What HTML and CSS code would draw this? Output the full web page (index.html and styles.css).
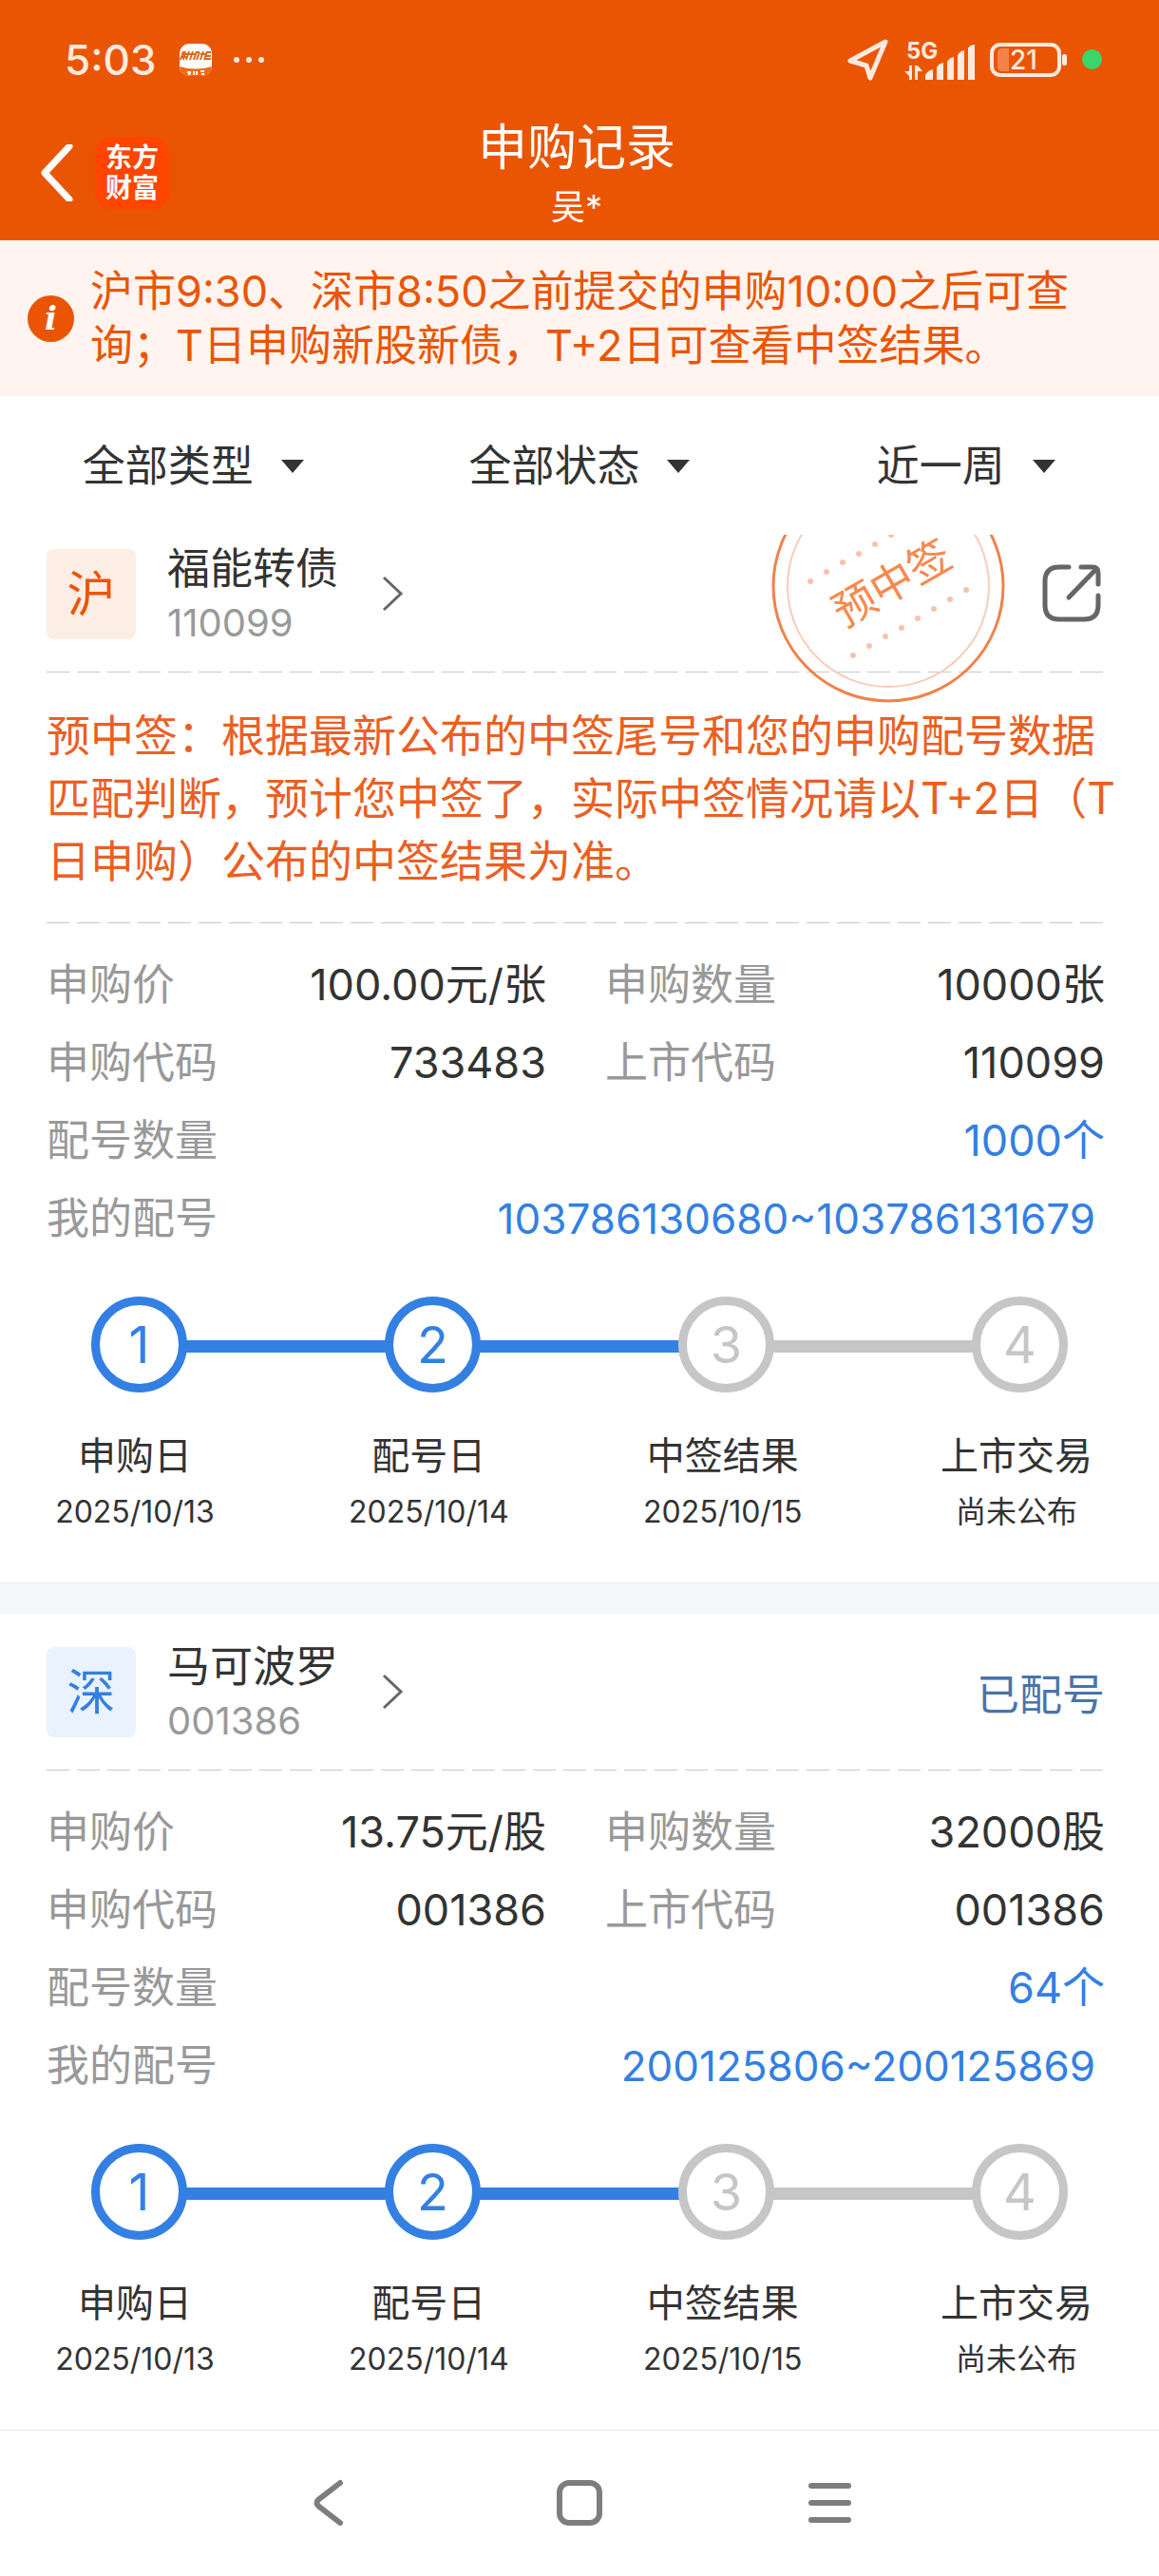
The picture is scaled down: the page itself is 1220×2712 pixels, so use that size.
FILE: index.html
```html
<!DOCTYPE html>
<html lang="zh-CN">
<head>
<meta charset="utf-8">
<meta name="viewport" content="width=device-width, initial-scale=1">
<title>申购记录</title>
<link rel="stylesheet" href="styles.css">
</head>
<body>
<header class="header">
  <div class="status">
    <span class="status-time">5:03</span>
    <svg class="status-app" width="34" height="34" viewBox="0 0 34 34" aria-hidden="true">
      <rect width="34" height="34" rx="10" fill="#fff"/>
      <path d="M0 24Q17 29 34 24A10 10 0 0 1 24 34H10A10 10 0 0 1 0 24Z" fill="#f26a10"/>
      <g fill="none" stroke="#d9691c" stroke-width="2">
        <path d="M4 8L1 17M6 8l-2 9M2 11h7M1 14h7M10 8l-3 9M14 8l-3 9M9 11h7M18 8l-3 9M17 9h4M21 9l-3 8M25 8l-3 9M22 11h5M29 8l-3 9M29 9h4M28 13h5M27 16h6"/>
      </g>
      <path d="M8 30h4M9 32h3M15 29v4M18 29v4M22 29h4M23 32h3" stroke="#fff" stroke-width="2"/>
    </svg>
    <svg width="34" height="8" viewBox="0 0 34 8" fill="#ffeadf" aria-hidden="true"><circle cx="4" cy="4" r="3"/><circle cx="17" cy="4" r="3"/><circle cx="30" cy="4" r="3"/></svg>
    <div class="status-right">
      <svg width="46" height="46" viewBox="0 0 46 46" fill="none" stroke="#ffeadf" stroke-width="5" stroke-linejoin="round" aria-hidden="true"><path d="M41 4L4 24l17 5 4 13Z"/></svg>
      <svg class="signal" width="76" height="56" viewBox="0 -7 76 56" fill="#ffeadf" aria-hidden="true">
        <text class="signal-text" x="3" y="20">5G</text>
        <path d="M9 27v15H6v-4l-5-5h5v-6ZM12 42V27h3l5 6h-5v9Z"/>
        <path d="M23 42v-5q3-5 8-6v11ZM35 42V29q2-4 7-5v18ZM46 42V23q2-4 7-5v24ZM57 42V16q2-4 7-5v31ZM68 42V9q2-4 7-4v37Z"/>
      </svg>
      <svg width="84" height="38" viewBox="0 0 84 38" aria-hidden="true">
        <rect x="3" y="3" width="71" height="32" rx="9" fill="none" stroke="#ffeadf" stroke-width="4"/>
        <path d="M21 7v24h-7q-5 0-5-5V12q0-5 5-5Z" fill="#f4834a"/>
        <rect x="77" y="13" width="5" height="12" rx="2" fill="#ffeadf"/>
        <text class="battery-text" x="22" y="29" fill="#ffeadf">21</text>
      </svg>
      <span class="status-dot"></span>
    </div>
  </div>
  <div class="titlebar">
    <div class="titlebar-left">
      <button class="icon-button" type="button" aria-label="返回">
        <svg width="36" height="60" viewBox="0 0 36 60" fill="none" stroke="#fff" stroke-width="7" stroke-linecap="round" stroke-linejoin="round"><path d="M31 2L5 30l26 28"/></svg>
      </button>
      <span class="logo">东方<br>财富</span>
    </div>
    <div class="titlebar-center">
      <h1 class="title">申购记录</h1>
      <p class="subtitle">吴*</p>
    </div>
  </div>
</header>

<main>
  <section class="notice">
    <span class="notice-icon" aria-hidden="true">i</span>
    <p class="notice-text">沪市9:30、深市8:50之前提交的申购10:00之后可查询；T日申购新股新债，T+2日可查看中签结果。</p>
  </section>

  <form class="filters">
    <label class="filter"><select class="filter-select" aria-label="类型"><option>全部类型</option></select><span class="filter-arrow"></span></label>
    <label class="filter"><select class="filter-select" aria-label="状态"><option>全部状态</option></select><span class="filter-arrow"></span></label>
    <label class="filter"><select class="filter-select" aria-label="时间"><option>近一周</option></select><span class="filter-arrow"></span></label>
  </form>

  <article class="card">
    <svg class="stamp" width="250" height="250" viewBox="0 0 250 250" aria-label="预中签" role="img">
      <circle cx="125" cy="125" r="121" fill="none" stroke="#f0824a" stroke-width="3"/>
      <circle cx="125" cy="125" r="106" fill="none" stroke="#f8cdb8" stroke-width="2"/>
      <g fill="#f6c3aa">
        <circle cx="43" cy="120" r="3"/><circle cx="60" cy="110" r="3"/><circle cx="77" cy="100" r="3"/><circle cx="94" cy="91" r="3"/><circle cx="111" cy="81" r="3"/><circle cx="128" cy="71" r="3"/>
        <circle cx="88" cy="198" r="3"/><circle cx="105" cy="188" r="3"/><circle cx="122" cy="178" r="3"/><circle cx="139" cy="169" r="3"/><circle cx="156" cy="159" r="3"/><circle cx="173" cy="149" r="3"/><circle cx="190" cy="139" r="3"/><circle cx="207" cy="129" r="3"/>
      </g>
      <text class="stamp-text" x="129" y="138" text-anchor="middle" transform="rotate(-30 129 122)">预中签</text>
    </svg>
    <div class="card-head">
      <span class="market market-sh">沪</span>
      <a class="stock" href="#110099">
        <span class="stock-names"><span class="stock-name">福能转债</span><span class="stock-code">110099</span></span>
        <svg width="24" height="40" viewBox="0 0 24 40" fill="none" stroke="#666" stroke-width="3"><path d="M2 3l18 17L2 37"/></svg>
      </a>
      <button class="icon-button share" type="button" aria-label="分享">
        <svg width="62" height="62" viewBox="0 0 62 62" fill="none" stroke="#666" stroke-width="5" stroke-linecap="round" stroke-linejoin="round"><path d="M28 3H18Q3 3 3 18v25Q3 58 18 58h26Q59 58 59 43V33M41 3h12q6 0 6 6v12M57 5L28 35"/></svg>
      </button>
    </div>
    <hr class="dash">
    <p class="tip">预中签：根据最新公布的中签尾号和您的申购配号数据匹配判断，预计您中签了，实际中签情况请以T+2日（T日申购）公布的中签结果为准。</p>
    <hr class="dash">
    <dl class="facts">
      <div class="fact"><dt>申购价</dt><dd>100.00元/张</dd></div>
      <div class="fact"><dt>申购数量</dt><dd>10000张</dd></div>
      <div class="fact"><dt>申购代码</dt><dd>733483</dd></div>
      <div class="fact"><dt>上市代码</dt><dd>110099</dd></div>
      <div class="fact fact-wide"><dt>配号数量</dt><dd class="blue">1000个</dd></div>
      <div class="fact fact-wide fact-range"><dt>我的配号</dt><dd class="blue">103786130680~103786131679</dd></div>
    </dl>
    <div class="track">
      <span class="node done">1</span><span class="link done"></span><span class="node done">2</span><span class="link done"></span><span class="node">3</span><span class="link"></span><span class="node">4</span>
    </div>
    <ol class="steps">
      <li class="step"><span class="step-name">申购日</span><span class="step-date">2025/10/13</span></li>
      <li class="step"><span class="step-name">配号日</span><span class="step-date">2025/10/14</span></li>
      <li class="step"><span class="step-name">中签结果</span><span class="step-date">2025/10/15</span></li>
      <li class="step"><span class="step-name">上市交易</span><span class="step-date">尚未公布</span></li>
    </ol>
  </article>

  <article class="card">
    <div class="card-head">
      <span class="market market-sz">深</span>
      <a class="stock" href="#001386">
        <span class="stock-names"><span class="stock-name">马可波罗</span><span class="stock-code">001386</span></span>
        <svg width="24" height="40" viewBox="0 0 24 40" fill="none" stroke="#666" stroke-width="3"><path d="M2 3l18 17L2 37"/></svg>
      </a>
      <span class="state">已配号</span>
    </div>
    <hr class="dash">
    <dl class="facts">
      <div class="fact"><dt>申购价</dt><dd>13.75元/股</dd></div>
      <div class="fact"><dt>申购数量</dt><dd>32000股</dd></div>
      <div class="fact"><dt>申购代码</dt><dd>001386</dd></div>
      <div class="fact"><dt>上市代码</dt><dd>001386</dd></div>
      <div class="fact fact-wide"><dt>配号数量</dt><dd class="blue">64个</dd></div>
      <div class="fact fact-wide fact-range"><dt>我的配号</dt><dd class="blue">200125806~200125869</dd></div>
    </dl>
    <div class="track">
      <span class="node done">1</span><span class="link done"></span><span class="node done">2</span><span class="link done"></span><span class="node">3</span><span class="link"></span><span class="node">4</span>
    </div>
    <ol class="steps">
      <li class="step"><span class="step-name">申购日</span><span class="step-date">2025/10/13</span></li>
      <li class="step"><span class="step-name">配号日</span><span class="step-date">2025/10/14</span></li>
      <li class="step"><span class="step-name">中签结果</span><span class="step-date">2025/10/15</span></li>
      <li class="step"><span class="step-name">上市交易</span><span class="step-date">尚未公布</span></li>
    </ol>
  </article>
</main>

<nav class="navbar">
  <button class="icon-button nav-button" type="button" aria-label="后退"><svg width="50" height="50" viewBox="0 0 50 50" fill="none" stroke="#7d7d7d" stroke-width="6" stroke-linecap="round"><path d="M37 4L15 21q-5 4 0 8l22 17"/></svg></button>
  <button class="icon-button nav-button" type="button" aria-label="主页"><svg width="50" height="50" viewBox="0 0 50 50" fill="none" stroke="#7d7d7d" stroke-width="6"><rect x="4" y="4" width="42" height="42" rx="10"/></svg></button>
  <button class="icon-button nav-button" type="button" aria-label="最近任务"><svg width="50" height="50" viewBox="0 0 50 50" fill="none" stroke="#7d7d7d" stroke-width="6" stroke-linecap="round"><path d="M5 7h39M5 25h39M5 43h39"/></svg></button>
</nav>
</body>
</html>
```

FILE: styles.css
```css
* {
  box-sizing: border-box;
}

body {
  margin: 0;
  background: #fff;
  color: #333;
  font-family: Inter, "Noto Sans CJK SC", sans-serif;
  font-size: 45px;
}

h1, p, dl, dd, ol {
  margin: 0;
  padding: 0;
}

svg {
  display: block;
}

.icon-button {
  border: 0;
  padding: 0;
  background: none;
}

/* header */
.header {
  background: #ea5504;
  color: #fff;
}

.status {
  display: flex;
  align-items: center;
  height: 125px;
  padding: 0 60px 0 68px;
  color: #ffeadf;
}

.status-time {
  font-size: 44px;
  font-weight: 500;
}

.status-app {
  margin: 0 22px 0 24px;
}

.status-right {
  display: flex;
  align-items: center;
  gap: 14px;
  margin-left: auto;
}

.signal-text {
  font-size: 24px;
  font-weight: 700;
}

.battery-text {
  font-size: 28px;
  font-weight: 500;
}

.status-dot {
  width: 21px;
  height: 21px;
  border-radius: 50%;
  background: #38d66b;
}

.titlebar {
  display: grid;
  grid-template-columns: 1fr auto 1fr;
  align-items: center;
  padding: 0 48px 4px 42px;
}

.titlebar-left {
  display: flex;
  align-items: center;
  gap: 22px;
  padding-bottom: 10px;
}

.logo {
  width: 78px;
  padding: 6px 0;
  border-radius: 18px;
  background: #ff4500;
  font-size: 28px;
  font-weight: 700;
  line-height: 32px;
  text-align: center;
}

.titlebar-center {
  text-align: center;
}

.title {
  font-size: 52px;
  font-weight: 400;
  line-height: 62px;
}

.subtitle {
  font-size: 36px;
  line-height: 62px;
}

/* notice */
.notice {
  display: flex;
  align-items: center;
  gap: 17px;
  padding: 25px 50px 25px 29px;
  background: #fff4ef;
  color: #ea5504;
}

.notice-icon {
  flex: none;
  width: 49px;
  height: 49px;
  border-radius: 50%;
  background: #ea5504;
  color: #fff;
  font: italic 700 34px/48px "DejaVu Serif", serif;
  text-align: center;
}

.notice-text {
  line-height: 57px;
}

/* filters */
.filters {
  display: grid;
  grid-template-columns: repeat(3, 1fr);
  height: 146px;
  padding-top: 2px;
}

.filter {
  display: flex;
  align-items: center;
  justify-content: center;
  gap: 28px;
}

.filter-select {
  appearance: none;
  border: 0;
  padding: 0;
  background: none;
  color: #333;
  font: inherit;
  line-height: 66px;
}

.filter-arrow {
  border: 12px solid transparent;
  border-top: 14px solid #333;
  border-bottom: 0;
}

/* records */
.card {
  position: relative;
  overflow: hidden;
  padding: 22px 57px 44px 49px;
  border-bottom: 1px solid #ebecee;
}

.filters + .card {
  padding-top: 3px;
}

.card + .card {
  border-top: 33px solid #f6f7f9;
}

.card-head {
  display: flex;
  align-items: center;
  padding-bottom: 23px;
}

.market {
  width: 94px;
  border-radius: 8px;
  font-size: 51px;
  line-height: 95px;
  text-align: center;
}

.market-sh {
  background: #fcede5;
  color: #ea5504;
}

.market-sz {
  background: #e9f2fd;
  color: #3380e2;
}

.stock {
  display: flex;
  align-items: center;
  gap: 46px;
  margin-left: 33px;
  color: #333;
  text-decoration: none;
}

.stock-names {
  padding-top: 4px;
}

.stock-name,
.stock-code {
  display: block;
  line-height: 57px;
}

.stock-code {
  color: #999;
  font-size: 40px;
}

.share,
.state {
  margin-left: auto;
}

.share {
  margin-right: 4px;
}

.state {
  color: #4a74ab;
}

.stamp {
  position: absolute;
  top: -71px;
  right: 160px;
}

.stamp-text {
  fill: #f58a4f;
  font-size: 45px;
}

.dash {
  height: 1px;
  margin: 0;
  border: 0;
  background: repeating-linear-gradient(90deg, #c8c8c8 0 24px, transparent 24px 32px);
}

.tip {
  margin-right: -24px;
  padding: 33px 0 32px;
  color: #ea6024;
  font-size: 46px;
  line-height: 66px;
}

.facts {
  display: grid;
  grid-template-columns: 1fr 1fr;
  column-gap: 62px;
  padding-top: 24px;
  line-height: 82px;
}

.fact {
  display: flex;
  justify-content: space-between;
}

.fact dt {
  color: #999;
}

.fact-wide {
  grid-column: 1 / -1;
}

.fact-range {
  padding-right: 10px;
}

.fact-range dd {
  font-size: 44px;
}

.fact .blue {
  color: #3380e2;
}

/* progress */
.track {
  display: flex;
  align-items: center;
  margin: 41px 39px 0 47px;
}

.node {
  width: 101px;
  border: 9px solid #c6c6c6;
  border-radius: 50%;
  color: #c6c6c6;
  font-size: 54px;
  line-height: 83px;
  text-align: center;
}

.node.done {
  border-color: #3380e2;
  color: #3380e2;
}

.link {
  flex: 1;
  height: 13px;
  margin: 4px -2px 0;
  background: #c6c6c6;
}

.link.done {
  background: #3380e2;
}

.steps {
  display: flex;
  justify-content: space-between;
  margin: 38px 5px 0;
  list-style: none;
}

.step {
  width: 176px;
  text-align: center;
  white-space: nowrap;
}

.step-name,
.step-date {
  display: block;
}

.step-name {
  font-size: 40px;
  line-height: 58px;
}

.step-date {
  font-size: 32px;
  line-height: 60px;
}

/* system navigation */
.navbar {
  display: flex;
  justify-content: center;
  padding: 51px 0 52px;
}

.nav-button {
  display: flex;
  justify-content: center;
  width: 264px;
}
```
